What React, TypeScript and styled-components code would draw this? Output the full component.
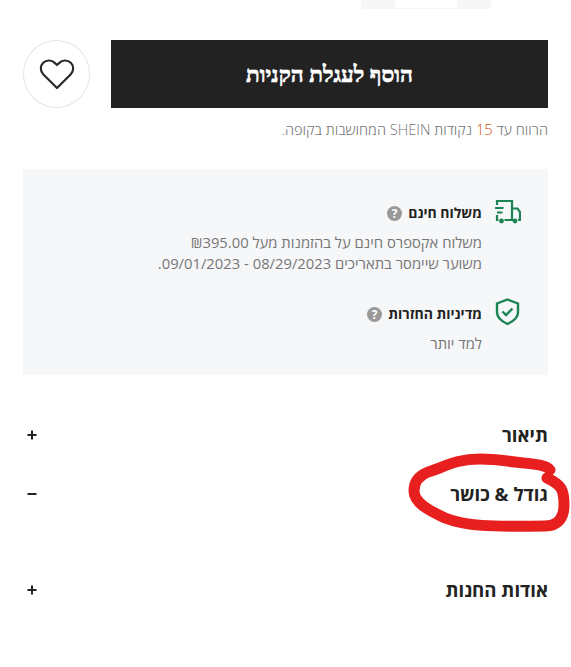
import React from "react";
import styled, { createGlobalStyle } from "styled-components";

const Global = createGlobalStyle`
  html, body { margin: 0; padding: 0; background: #fff; }
  body { font-family: "Open Sans", "Noto Sans", "Liberation Sans", sans-serif; }
  * { box-sizing: border-box; }
`;
const Page = styled.div`
  position: relative; width: 571px; height: 667px; overflow: hidden; direction: rtl; background: #fff;
`;
const StubRow = styled.div`
  display: flex; width: 130px; height: 9px; margin-right: 80px; background: #f6f6f6; justify-content: center;
`;
const StubCenter = styled.div`width: 62px; height: 8px; background: #fff;`;
const Actions = styled.div`
  display: flex; gap: 21px; padding: 0 23px; margin-top: 31px; align-items: flex-start;
`;
const AddButton = styled.button`
  flex: 1; height: 68px; border: 0; background: #222; color: #fff; padding: 1px 0 0;
  font-family: "Liberation Serif", serif; font-weight: 700; font-size: 22.5px;
  -webkit-text-stroke: 0.6px #fff;
`;
const Wish = styled.button`
  width: 67px; height: 68px; flex: none; border-radius: 50%; border: 1px solid #e5e5e5; background: #fff;
  display: flex; align-items: center; justify-content: center; padding: 0;
`;
const Points = styled.p`
  margin: 11px 23px 0; font-size: 14.6px; line-height: 20px; color: #767676; font-weight: 300;
`;
const Orange = styled.span`color: #c9500a;`;
const Panel = styled.section`
  margin: 30px 23px 0; height: 206px; background: #f6f7f9; padding: 31px 66px 0 0; position: relative;
`;
const Info = styled.div`position: relative; margin-bottom: 27px;`;
const IconSlot = styled.div<{ $top: number }>`
  position: absolute; right: -39px; top: ${p => p.$top}px; width: 30px; height: 30px;
`;
const InfoTitle = styled.div`
  display: flex; align-items: center; gap: 6px; font-size: 14px; font-weight: 700; color: #222; line-height: 26px;
`;
const Help = styled.span`
  width: 15px; height: 15px; border-radius: 50%; background: #999; color: #fff; font-size: 12px; font-weight: 700;
  display: flex; align-items: center; justify-content: center; line-height: 15px; direction: ltr;
`;
const InfoText = styled.div`font-size: 14.8px; line-height: 21px; color: #767676; margin-top: 6px;`;
const Accordion = styled.div`margin: 0 23px; padding-top: 42px;`;
const AccRow = styled.div<{ $h: number }>`
  display: flex; justify-content: space-between; align-items: flex-start; height: ${p => p.$h}px; padding-left: 4px;
`;
const AccTitle = styled.h3`margin: 0; font-size: 18.6px; line-height: 36px; font-weight: 700; color: #222;`;
const Sign = styled.svg`width: 10px; height: 10px; margin-top: 13px; display: block;`;
const Scribble = styled.svg`position: absolute; left: 0; top: 0; pointer-events: none;`;

const PlusIcon = () => (
  <Sign viewBox="0 0 10 10"><path d="M0.500 5H9.500M5 .5V9.500" stroke="#222" strokeWidth="2" /></Sign>
);
const MinusIcon = () => (
  <Sign viewBox="0 0 10 10"><path d="M0.500 5H9.500" stroke="#222" strokeWidth="2" /></Sign>
);

export default function App() {
  return (
    <Page>
      <Global />
      <StubRow><StubCenter /></StubRow>
      <Actions>
        <AddButton>הוסף לעגלת הקניות</AddButton>
        <Wish aria-label="wishlist">
          <svg width="36" height="32" viewBox="0 0 36 32" fill="none">
            <path d="M18 30 4.400 16.500C1 13 1 8 4.200 4.800c3.300-3.200 8.500-3 11.800.3L18 7l2-1.900c3.300-3.300 8.500-3.500 11.800-.3C35 8 35 13 31.600 16.500Z" stroke="#2a2a2a" strokeWidth="2.200" strokeLinejoin="round" />
          </svg>
        </Wish>
      </Actions>
      <Points>הרווח עד <Orange>15</Orange> נקודות SHEIN המחושבות בקופה.</Points>
      <Panel>
        <Info>
          <IconSlot $top={-3}>
            <svg width="30" height="30" viewBox="0 0 30 30" fill="none" stroke="#1b8354" strokeWidth="2.200">
              <path d="M6 8V4H21V23H13.500M6 18V23H7.500" />
              <path d="M21 11.500H26.500L29 15V23H27" />
              <path d="M4 11H12.500M6 15.500H11.500" />
              <circle cx="10.500" cy="24" r="2.400" fill="#1b8354" stroke="none" />
              <circle cx="24" cy="24" r="2.400" fill="#1b8354" stroke="none" />
            </svg>
          </IconSlot>
          <InfoTitle>משלוח חינם<Help>?</Help></InfoTitle>
          <InfoText>משלוח אקספרס חינם על בהזמנות מעל ₪395.00<br />משוער שיימסר בתאריכים 08/29/2023 - 09/01/2023.</InfoText>
        </Info>
        <Info>
          <IconSlot $top={-4}>
            <svg width="30" height="30" viewBox="0 0 30 30" fill="none" stroke="#1b8354" strokeWidth="2.400">
              <path d="M16.500 2.500 27 6.500v9c0 5-4 8.500-10.500 11.500C10 24 6 20.500 6 15.500v-9Z" />
              <path d="M11.500 14.500l3.500 3.500 6.500-6.500" />
            </svg>
          </IconSlot>
          <InfoTitle>מדיניות החזרות<Help>?</Help></InfoTitle>
          <InfoText>למד יותר</InfoText>
        </Info>
      </Panel>
      <Accordion>
        <AccRow $h={59}><AccTitle>תיאור</AccTitle><PlusIcon /></AccRow>
        <AccRow $h={96}><AccTitle>גודל &amp; כושר</AccTitle><MinusIcon /></AccRow>
        <AccRow $h={60}><AccTitle>אודות החנות</AccTitle><PlusIcon /></AccRow>
      </Accordion>
      <Scribble width="571" height="667" viewBox="0 0 571 667" fill="none">
        <path d="M550 470C546 464 530 464 515 462C500 460 490 459 480 459C455 459 445 467 428 472C418 476 414 483 414 491C414 503 430 511 445 518C465 526 490 527 545 526C558 526 564 518 564 505C564 490 562 485 547 478" stroke="#e81f1f" strokeWidth="11" strokeLinecap="round" strokeLinejoin="round" />
      </Scribble>
    </Page>
  );
}
